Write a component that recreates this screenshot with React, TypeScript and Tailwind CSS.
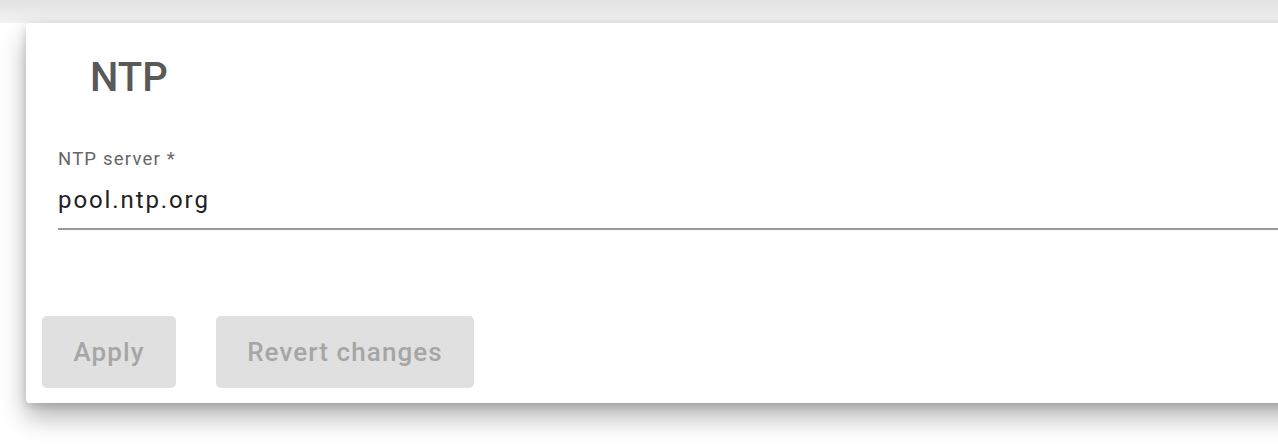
export default function App() {
  return (
    <div className="relative h-[446px] w-full overflow-hidden bg-white font-['Roboto',sans-serif]">
      {/* shadow of the card above */}
      <div className="h-[23px] w-full bg-gradient-to-b from-[#e2e2e2] to-[#f2f2f2]" />

      <div className="ml-[26px] w-[1300px] rounded-[4px] bg-white shadow-[0_14px_26px_rgba(0,0,0,0.3),0_3px_8px_rgba(0,0,0,0.14)]">
        <div className="pl-[64px] pt-[31px]">
          <h2 className="text-[40px] font-medium leading-[48px] text-[#595959]">NTP</h2>
        </div>

        <div className="mt-[46px] pl-[32px]">
          <label className="block text-[18.5px] leading-[22px] tracking-[1.2px] text-[#666666]">NTP server *</label>
          <div className="mt-[15px] border-b-2 border-[#999999] pb-[13px]">
            <input
              readOnly
              value="pool.ntp.org"
              className="block w-full bg-transparent text-[24px] leading-[30px] tracking-[1.9px] text-[#212121] outline-none"
            />
          </div>
        </div>

        <div className="mt-[86px] flex gap-[40px] pb-[15px] pl-[16px]">
          <button className="h-[72px] w-[134px] rounded-[5px] bg-[#e0e0e0] text-center text-[26px] font-medium tracking-[1.1px] text-[#a6a6a6]">
            Apply
          </button>
          <button className="h-[72px] w-[258px] rounded-[5px] bg-[#e0e0e0] text-center text-[26px] font-medium tracking-[1.1px] text-[#a6a6a6]">
            Revert changes
          </button>
        </div>
      </div>
    </div>
  );
}
